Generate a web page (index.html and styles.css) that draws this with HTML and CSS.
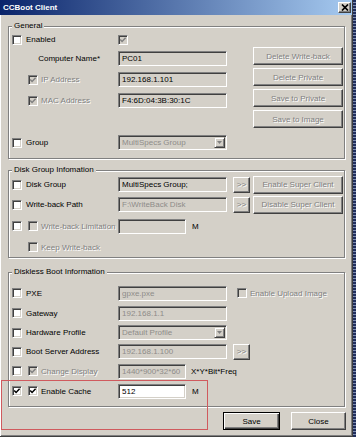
FILE: index.html
```html
<!DOCTYPE html>
<html lang="en">
<head>
    <meta charset="UTF-8">
    <meta name="viewport" content="width=device-width, initial-scale=1.0">
    <title>CCBoot Client</title>
    <link rel="stylesheet" href="styles.css">
</head>
<body>
<div class="window">
    <div class="titlebar">
        <span class="title">CCBoot Client</span>
        <span class="close-x"><svg width="8" height="7" viewBox="0 0 8 7"><path d="M1 0.5L7 6.5M7 0.5L1 6.5" stroke="#000" stroke-width="1.7"/></svg></span>
    </div>

    <div class="content">
        <!-- General -->
        <div class="group general">
            <span class="legend">General</span>
            <div class="cols">
                <div class="fields">
                    <div class="row row-top">
                        <span class="lead"><span class="cb"></span>Enabled</span>
                        <span class="cb off"><svg width="8" height="8" viewBox="0 0 8 8"><path d="M1.2 3.4L3.1 5.4L6.6 1.8" fill="none" stroke="#808080" stroke-width="1.5"/></svg></span>
                    </div>
                    <div class="row">
                        <span class="lead right">Computer Name*</span>
                        <input class="field" value="PC01" readonly>
                    </div>
                    <div class="row">
                        <span class="lead"><span class="cb off indent"><svg width="8" height="8" viewBox="0 0 8 8"><path d="M1.2 3.4L3.1 5.4L6.6 1.8" fill="none" stroke="#808080" stroke-width="1.5"/></svg></span><span class="dim-text">IP Address</span></span>
                        <input class="field" value="192.168.1.101" readonly>
                    </div>
                    <div class="row">
                        <span class="lead"><span class="cb off indent"><svg width="8" height="8" viewBox="0 0 8 8"><path d="M1.2 3.4L3.1 5.4L6.6 1.8" fill="none" stroke="#808080" stroke-width="1.5"/></svg></span><span class="dim-text">MAC Address</span></span>
                        <input class="field" value="F4:6D:04:3B:30:1C" readonly>
                    </div>
                    <div class="row"></div>
                    <div class="row">
                        <span class="lead"><span class="cb"></span>Group</span>
                        <div class="select dim">MultiSpecs Group<span class="arrow"><svg width="5" height="3" viewBox="0 0 5 3"><path d="M0 0H5L2.5 3Z" fill="#808080"/></svg></span></div>
                    </div>
                </div>
                <div class="side">
                    <button class="btn" disabled>Delete Write-back</button>
                    <button class="btn" disabled>Delete Private</button>
                    <button class="btn" disabled>Save to Private</button>
                    <button class="btn" disabled>Save to Image</button>
                </div>
            </div>
        </div>

        <!-- Disk group -->
        <div class="group disk">
            <span class="legend">Disk Group Infomation</span>
            <div class="row h19">
                <span class="lead"><span class="cb"></span>Disk Group</span>
                <input class="field" value="MultiSpecs Group;" readonly>
                <button class="btn more" disabled>&gt;&gt;</button>
                <button class="btn wide" disabled>Enable Super Client</button>
            </div>
            <div class="row">
                <span class="lead"><span class="cb"></span>Write-back Path</span>
                <input class="field dim" value="F:\WriteBack Disk" disabled>
                <button class="btn more" disabled>&gt;&gt;</button>
                <button class="btn wide" disabled>Disable Super Client</button>
            </div>
            <div class="row h22">
                <span class="lead"><span class="cb"></span><span class="cb off sub"></span><span class="dim-text">Write-back Limitation</span></span>
                <input class="field short dim" value="" disabled>
                <span class="unit">M</span>
            </div>
            <div class="row h20">
                <span class="lead"><span class="cb off indent"></span><span class="dim-text">Keep Write-back</span></span>
            </div>
        </div>

        <!-- Diskless boot -->
        <div class="group diskless">
            <span class="legend">Diskless Boot Information</span>
            <div class="row h20 first">
                <span class="lead"><span class="cb"></span>PXE</span>
                <input class="field dim" value="gpxe.pxe" disabled>
                <span class="cb off upload"></span><span class="dim-text">Enable Upload Image</span>
            </div>
            <div class="row h20">
                <span class="lead"><span class="cb"></span>Gateway</span>
                <input class="field dim" value="192.168.1.1" disabled>
            </div>
            <div class="row h19">
                <span class="lead"><span class="cb"></span>Hardware Profile</span>
                <div class="select dim">Default Profile<span class="arrow"><svg width="5" height="3" viewBox="0 0 5 3"><path d="M0 0H5L2.5 3Z" fill="#808080"/></svg></span></div>
            </div>
            <div class="row h19">
                <span class="lead"><span class="cb"></span>Boot Server Address</span>
                <input class="field dim" value="192.168.1.100" disabled>
                <button class="btn more" disabled>&gt;&gt;</button>
            </div>
            <div class="row h20">
                <span class="lead"><span class="cb"></span><span class="cb off sub"><svg width="8" height="8" viewBox="0 0 8 8"><path d="M1.2 3.4L3.1 5.4L6.6 1.8" fill="none" stroke="#808080" stroke-width="1.5"/></svg></span><span class="dim-text">Change Display</span></span>
                <input class="field short dim" value="1440*900*32*60" disabled>
                <span class="note">X*Y*Bit*Freq</span>
            </div>
            <div class="row h20">
                <span class="lead"><span class="cb"><svg width="8" height="8" viewBox="0 0 8 8"><path d="M1.2 3.4L3.1 5.4L6.6 1.8" fill="none" stroke="#000" stroke-width="1.5"/></svg></span><span class="cb sub"><svg width="8" height="8" viewBox="0 0 8 8"><path d="M1.2 3.4L3.1 5.4L6.6 1.8" fill="none" stroke="#000" stroke-width="1.5"/></svg></span>Enable Cache</span>
                <input class="field short white" value="512">
                <span class="unit">M</span>
            </div>
        </div>

        <div class="footer">
            <button class="btn save">Save</button>
            <button class="btn close">Close</button>
        </div>
    </div>

    <div class="highlight"></div>
</div>
</body>
</html>
```

FILE: styles.css
```css
* {
    box-sizing: border-box;
}
html, body {
    margin: 0;
}
body {
    width: 356px;
    height: 437px;
    overflow: hidden;
    background: repeating-linear-gradient(#1f2d5c 0 2px, #7f8db0 2px 3px);
    font-family: "Liberation Sans", Arial, sans-serif;
    font-size: 8px;
    color: #000;
}
.window {
    position: relative;
    width: 353px;
    height: 437px;
    background: #d4d0c8;
    border-right: 1px solid #404040;
    border-bottom: 1px solid #404040;
    box-shadow: inset 1px 0 0 #fff, inset -1px -1px 0 #808080;
}
.titlebar {
    height: 15px;
    display: flex;
    align-items: center;
    justify-content: space-between;
    padding: 0 1px 0 3px;
    background: linear-gradient(to right, #0a246a, #a6caf0);
}
.title {
    color: #fff;
    font-weight: bold;
}
.close-x {
    width: 13px;
    height: 11px;
    display: flex;
    align-items: center;
    justify-content: center;
    background: #d4d0c8;
    border: 1px solid;
    border-color: #fff #404040 #404040 #fff;
    box-shadow: inset -1px -1px 0 #808080;
}
.content {
    padding: 11px 7px 0 8px;
}
.group {
    border: 1px solid #808080;
    box-shadow: inset 1px 1px 0 #fff, 1px 1px 0 #fff;
    padding: 0 1px 0 3px;
}
.legend {
    display: block;
    width: fit-content;
    height: 10px;
    line-height: 10px;
    margin: -6px 0 0 0;
    padding: 0 2px;
    background: #d4d0c8;
}
.general {
    padding-bottom: 5px;
}
.disk {
    margin-top: 11px;
}
.diskless {
    margin-top: 14px;
    padding-bottom: 5px;
}
.cols {
    display: flex;
    justify-content: space-between;
}
.fields {
    width: 216px;
}
.side {
    width: 90px;
    padding-top: 16px;
    display: flex;
    flex-direction: column;
    gap: 3px;
}
.side .btn {
    width: 90px;
}
.row {
    display: flex;
    align-items: center;
    height: 21px;
}
.row-top {
    height: 17px;
}
.h19 { height: 19px; }
.h20 { height: 20px; }
.h22 { height: 22px; }
.diskless .first {
    margin-top: 6px;
}
.lead {
    width: 106px;
    flex: none;
    display: flex;
    align-items: center;
    white-space: nowrap;
}
.lead.right {
    justify-content: flex-end;
    padding-right: 18px;
}
.cb {
    width: 10px;
    height: 10px;
    flex: none;
    display: flex;
    background: #fff;
    border: 1px solid;
    border-color: #808080 #fff #fff #808080;
    box-shadow: inset 1px 1px 0 #404040, inset -1px -1px 0 #d4d0c8;
    margin-right: 4px;
}
.cb svg {
    display: block;
}
.cb.off {
    background: #d4d0c8;
}
.cb + .cb {
    margin-left: 2px;
}
.cb.sub {
    margin-right: 3px;
}
.cb.indent {
    margin-left: 16px;
    margin-right: 3px;
}
.cb.upload {
    margin-left: 10px;
    margin-right: 3px;
}
.dim-text {
    color: #808080;
    text-shadow: 1px 1px 0 #fff;
    white-space: nowrap;
}
.field {
    width: 109px;
    height: 15px;
    flex: none;
    margin: 0;
    padding: 0 3px;
    font: inherit;
    color: #000;
    background: #d4d0c8;
    border: 1px solid;
    border-color: #808080 #fff #fff #808080;
    box-shadow: inset 1px 1px 0 #404040, inset -1px -1px 0 #d4d0c8;
    outline: none;
}
.field.short {
    width: 68px;
}
.field.white {
    background: #fff;
}
.dim {
    color: #8e8c88;
}
.select {
    width: 109px;
    height: 15px;
    flex: none;
    display: flex;
    align-items: center;
    justify-content: space-between;
    padding-left: 3px;
    background: #d4d0c8;
    border: 1px solid;
    border-color: #808080 #fff #fff #808080;
    box-shadow: inset 1px 1px 0 #404040, inset -1px -1px 0 #d4d0c8;
}
.arrow {
    width: 11px;
    height: 11px;
    margin-right: 1px;
    display: flex;
    align-items: center;
    justify-content: center;
    border: 1px solid;
    border-color: #d4d0c8 #404040 #404040 #d4d0c8;
    box-shadow: inset 1px 1px 0 #fff, inset -1px -1px 0 #808080;
}
.unit {
    margin-left: 6px;
}
.note {
    margin-left: 5px;
    white-space: nowrap;
}
.btn {
    height: 18px;
    margin: 0;
    padding: 0;
    font: inherit;
    color: #000;
    background: #d4d0c8;
    border: 1px solid;
    border-color: #fff #404040 #404040 #fff;
    box-shadow: inset -1px -1px 0 #808080, inset 1px 1px 0 #d4d0c8;
    white-space: nowrap;
}
.btn:disabled {
    color: #808080;
    text-shadow: 1px 1px 0 #fff;
}
.more {
    width: 17px;
    height: 16px;
    margin-left: 6px;
}
.wide {
    width: 90px;
    margin-left: 3px;
}
.footer {
    display: flex;
    justify-content: flex-end;
    gap: 11px;
    margin: 5px -1px 0 0;
}
.save {
    width: 57px;
    border-color: #000;
    box-shadow: inset 1px 1px 0 #fff, inset -1px -1px 0 #404040, inset -2px -2px 0 #808080;
}
.close {
    width: 55px;
}
.highlight {
    position: absolute;
    left: 1px;
    top: 380px;
    width: 207px;
    height: 50px;
    border: 1px solid #d05a5e;
    pointer-events: none;
}
```
